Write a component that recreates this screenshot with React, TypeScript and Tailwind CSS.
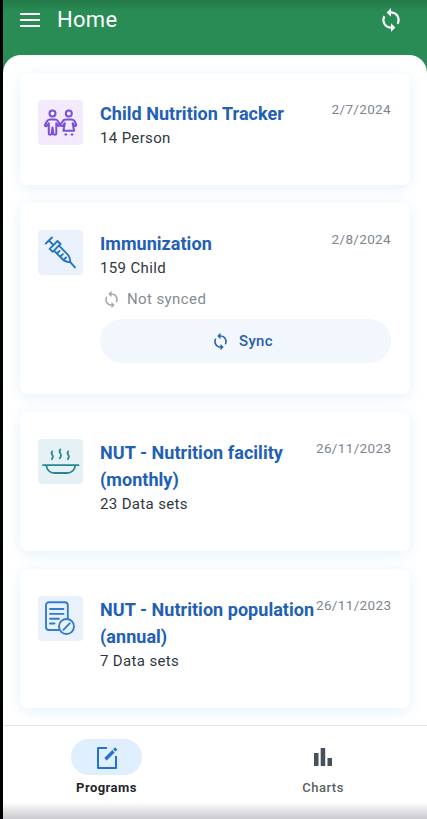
import type { ReactNode } from "react";

function SyncIcon({ className }: { className: string }) {
  return (
    <svg viewBox="0 0 24 24" fill="currentColor" className={className}>
      <path d="M12 4V1L8 5l4 4V6c3.31 0 6 2.69 6 6 0 1.01-.25 1.97-.7 2.8l1.46 1.46C19.54 15.03 20 13.57 20 12c0-4.42-3.58-8-8-8zm0 14c-3.31 0-6-2.69-6-6 0-1.01.25-1.97.7-2.8L5.24 7.74C4.46 8.97 4 10.43 4 12c0 4.42 3.58 8 8 8v3l4-4-4-4v3z" />
    </svg>
  );
}

const iconProps = {
  viewBox: "0 0 45 45",
  fill: "none",
  stroke: "currentColor",
  strokeLinecap: "round" as const,
  strokeLinejoin: "round" as const,
  className: "size-full",
};

function ChildrenIcon() {
  return (
    <svg {...iconProps} strokeWidth="2">
      <circle cx="14.5" cy="13.500" r="3" />
      <circle cx="30.800" cy="13.500" r="3" />
      <path d="M12 19.500h5c1.800 0 2.500.7 3.200 2l1.600 3M12 19.500c-1.800 0-2.500.7-3.200 2L7 24.700c-.6 1.200 1 2.100 1.900.9l1.900-2.400v10.300c0 1.600 2.800 1.600 2.900 0l.8-6 .8 6c.2 1.600 3 1.600 3 0V23.200l1.600 2.300c.8 1 1.700.4 2-.7" />
      <path d="M22.300 24.800l2.200-3.300c.8-1.300 1.600-2 3.300-2h5.800c1.700 0 2.500.7 3.200 2l1.400 3.100c.5 1.300-1.100 2-1.900.9l-1.700-2.300 1.500 7.500H25.400l1.500-7.500-1.900 2.300c-.9 1-2.400.5-2.700-.7" />
      <path d="M27.300 34.600h1M33.500 34.600h1" />
    </svg>
  );
}

function SyringeIcon() {
  return (
    <svg {...iconProps} strokeWidth="1.9">
      <path d="M7.800 13.500 14 7.500M10.900 10.500l4.600 4.600M11.700 18.800l7.800-7.800 3 3-7.800 7.800zM16 20.700l9.300 9.300c1.500 1.500 3.800 1.700 7.200 2.300-.5-3.500-.8-5.800-2.500-7.500L21 15.600M32.500 32.300l4.500 5M19 23.500l2.600-2.600M22.300 26.800l2.600-2.600M25.500 30l2.600-2.600" />
    </svg>
  );
}

function BowlIcon() {
  return (
    <svg {...iconProps} strokeWidth="1.800">
      <path d="M5 26.200h35.500M8.300 26.400c.5 4.500 3.700 7.600 8 7.600h12.800c4.400 0 7.600-3.200 8.300-7.600M14.300 12.400c-2.600 2.200 1.400 3.400.5 5.900-.2.900-.5 1.300-1 1.800M22.400 10.400c-2.800 2.600 1.500 4 .5 6.800-.3 1.100-.7 1.600-1.200 2.100M30.300 12.400c-2.600 2.200 1.400 3.400.5 5.900-.2.900-.5 1.300-1 1.800" />
    </svg>
  );
}

function FormIcon() {
  return (
    <svg {...iconProps} strokeWidth="1.900">
      <path d="M20.500 34H11c-1.900 0-3-1.100-3-3V9.300c0-1.900 1.100-3 3-3h15.800c1.900 0 3 1.100 3 3v13M12 13h13.500M12 17.900h13.500M12 22.800h9M12 27.500h4.500" />
      <circle cx="28.500" cy="30.500" r="7.500" />
      <path d="m25.400 33.800 6.300-6.500" />
    </svg>
  );
}

interface ProgramProps {
  title: string;
  count: string;
  date: string;
  height: string;
  iconStyle: string;
  icon: ReactNode;
  children?: ReactNode;
}

function ProgramCard({ title, count, date, height, iconStyle, icon, children }: ProgramProps) {
  return (
    <article
      className={`flex shrink-0 rounded-[8px] bg-white pt-[27px] pr-[19px] pl-[18px] shadow-[0_3px_14px_rgba(190,225,248,0.42)] ${height}`}
    >
      <div className={`mr-[17px] size-[45px] shrink-0 rounded-[4px] ${iconStyle}`}>{icon}</div>
      <div className="min-w-0 flex-1">
        <div className="flex justify-between">
          <h2 className="w-[216px] shrink-0 text-[18px] leading-[27px] font-bold tracking-[0.04px] text-[#2160b4]">
            {title}
          </h2>
          <time className="shrink-0 text-[13.5px] leading-[18px] tracking-[0.35px] text-[#7d858e]">
            {date}
          </time>
        </div>
        <p className="text-[15px] leading-[23px] tracking-[0.35px] text-[#303740]">{count}</p>
        {children}
      </div>
    </article>
  );
}

export default function App() {
  return (
    <div className="flex h-[819px] w-[427px] flex-col overflow-hidden border-l-[3px] border-black bg-[#288c54] font-['Roboto',sans-serif]">
      <header className="flex h-[55px] shrink-0 items-start justify-between bg-linear-to-b from-[#247847] to-[#288c54] to-20% pr-[23px] pl-[17px] text-white">
        <div className="flex h-10 items-center gap-[17px]">
          <svg viewBox="0 0 20 14" className="h-[14px] w-5" stroke="currentColor" strokeWidth="2">
            <path d="M0 1h20M0 7h20M0 13h20" />
          </svg>
          <h1 className="text-[22px] leading-10 tracking-[0.3px]">Home</h1>
        </div>
        <SyncIcon className="mt-[7px] size-[26px]" />
      </header>

      <main className="flex h-[670px] shrink-0 flex-col gap-[18px] overflow-hidden rounded-t-[18px] bg-white pt-[18px] pr-[17px] pl-[17px]">
        <ProgramCard
          title="Child Nutrition Tracker"
          count="14 Person"
          date="2/7/2024"
          height="h-[112px]"
          iconStyle="bg-[#f3eafd] text-[#7950d7]"
          icon={<ChildrenIcon />}
        />
        <ProgramCard
          title="Immunization"
          count="159 Child"
          date="2/8/2024"
          height="h-[191px]"
          iconStyle="bg-[#eaf1fb] text-[#2475c2]"
          icon={<SyringeIcon />}
        >
          <div className="mt-[9px] flex h-5 items-center gap-[6px] pl-[2px] text-[#858b90]">
            <SyncIcon className="size-[19px] text-[#a4a8aa]" />
            <span className="text-[15px] tracking-[0.4px]">Not synced</span>
          </div>
          <button className="mt-[10px] flex h-[44px] w-full items-center justify-center gap-[9px] rounded-full bg-[#f2f7fe] pr-[7px] text-[15px] font-medium tracking-[0.3px] text-[#285fa9]">
            <SyncIcon className="size-[19px]" />
            Sync
          </button>
        </ProgramCard>
        <ProgramCard
          title="NUT - Nutrition facility (monthly)"
          count="23 Data sets"
          date="26/11/2023"
          height="h-[139px]"
          iconStyle="bg-[#e6f1f6] text-[#278791]"
          icon={<BowlIcon />}
        />
        <ProgramCard
          title="NUT - Nutrition population (annual)"
          count="7 Data sets"
          date="26/11/2023"
          height="h-[139px]"
          iconStyle="bg-[#e9f2fc] text-[#327ccf]"
          icon={<FormIcon />}
        />
      </main>

      <nav className="grid h-[94px] shrink-0 grid-cols-2 border-t border-[#dbe7ec] bg-linear-to-b from-white from-82% to-[#c9c9ce] pt-[13px] pr-[2px] text-[13px] leading-[18px]">
        <button className="flex flex-col items-center pr-1">
          <span className="flex h-9 w-[71px] items-center justify-center rounded-full bg-[#e0effd] text-[#2273cf]">
            <svg viewBox="0 0 22 24" className="h-6 w-[22px]" fill="none" stroke="currentColor" strokeWidth="2">
              <path d="M11 3H2v20h18V11" strokeLinejoin="round" />
              <path d="M9.500 14.200 17.500 6.200" strokeWidth="3.400" />
              <path d="m18.300 5.400 1.900-1.900" strokeWidth="3.400" />
            </svg>
          </span>
          <span className="mt-1 font-bold tracking-[0.45px] text-[#23272c]">Programs</span>
        </button>
        <button className="flex flex-col items-center pl-[7px]">
          <span className="flex h-9 w-[71px] items-center justify-center text-[#46515e]">
            <svg viewBox="0 0 18 18" className="size-[18px]" fill="currentColor">
              <path d="M0 5h4.500v13H0zM6.700 0h4.500v18H6.700zM13.500 10H18v8h-4.500z" />
            </svg>
          </span>
          <span className="mt-1 font-medium tracking-[0.5px] text-[#596069]">Charts</span>
        </button>
      </nav>
    </div>
  );
}
